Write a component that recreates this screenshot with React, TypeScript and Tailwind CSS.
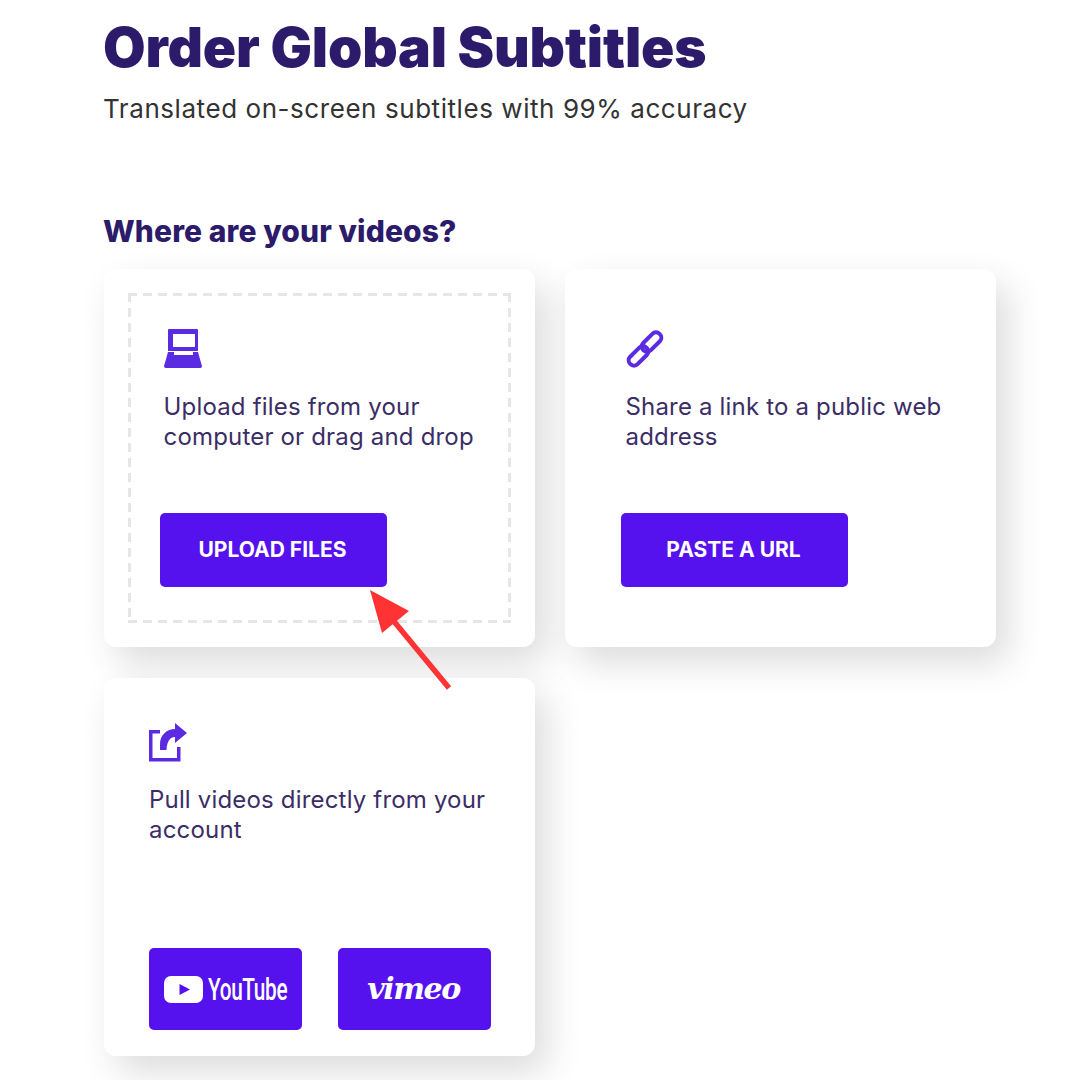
const inter = "font-['Inter',sans-serif]";

function LaptopIcon() {
  return (
    <svg width="38" height="40" viewBox="0 0 38 40" fill="#5a2be0" className="block">
      <path fillRule="evenodd" d="M5 1h28a1 1 0 0 1 1 1v21H4V2a1 1 0 0 1 1-1zM9 6v13h22V6z" />
      <path d="M4 24h6v3h19v-3h5l3.800 13.500a1.800 1.800 0 0 1-1.800 2.500H2a1.800 1.800 0 0 1-1.800-2.500z" />
    </svg>
  );
}

function LinkIcon() {
  return (
    <svg width="38" height="38" viewBox="0 0 38 38" fill="none" stroke="#5a2be0" strokeWidth="4" className="block overflow-visible">
      <g transform="rotate(-45 19 19)">
        <rect x="-2" y="14" width="23" height="10.500" rx="5" />
        <rect x="17" y="13.500" width="23" height="10.500" rx="5" />
      </g>
    </svg>
  );
}

function ShareIcon() {
  return (
    <svg width="40" height="40" viewBox="0 0 40 40" fill="#5a2be0" className="block">
      <path d="M0 7h11v3.500H3.500v24.500h24.500V24h3.500v14.500H0z" />
      <path d="M11 27V21C11 12 18 6 26 6V0L38 10L26 20V14C21 14 18 18 17.500 27Z" />
    </svg>
  );
}

function Arrow() {
  return (
    <svg className="absolute left-[360px] top-[580px]" width="100" height="120" viewBox="360 580 100 120">
      <path d="M370 590L409 611L382 633Z" fill="#ff3333" />
      <path d="M392 619L449 688" stroke="#ff3333" strokeWidth="5.500" fill="none" />
    </svg>
  );
}

function PrimaryButton({ label }: { label: string }) {
  return (
    <button className={`${inter} w-[227px] h-[74px] pr-[2px] rounded-[5px] bg-[#5512ee] text-white text-[21px] font-bold`}>
      {label}
    </button>
  );
}

export default function App() {
  return (
    <div className={`${inter} relative w-[1080px] h-[1080px] overflow-hidden bg-white pl-[104px] pt-[17px]`}>
      <h1 className="-ml-px text-[55px] leading-[60px] font-black text-[#2c1a6b] tracking-[-0.16px]">Order Global Subtitles</h1>
      <p className="-ml-px mt-[16px] text-[26px] leading-[32px] text-[#333333] tracking-[0.56px]">
        Translated on-screen subtitles with 99% accuracy
      </p>

      <h2 className="-ml-px mt-[88px] text-[30px] leading-[36px] font-extrabold text-[#2c1a6b] tracking-[0.1px]">Where are your videos?</h2>

      <div className="mt-[20px] grid grid-cols-[431px_431px] gap-x-[30px] gap-y-[31px]">
        {/* upload */}
        <div className="h-[378px] rounded-[12px] bg-white shadow-[12px_16px_36px_rgba(0,0,0,0.14)] p-[24px]">
          <div className="h-[330px] w-[383px] pl-[36px] pt-[35px] [background-image:linear-gradient(to_right,#e6e6e6_9px,transparent_9px),linear-gradient(to_right,#e6e6e6_9px,transparent_9px),linear-gradient(to_bottom,#e6e6e6_9px,transparent_9px),linear-gradient(to_bottom,#e6e6e6_9px,transparent_9px)] [background-size:15px_3px,15px_3px,3px_15px,3px_15px] [background-position:0_0,0_100%,0_0,100%_0] [background-repeat:repeat-x,repeat-x,repeat-y,repeat-y]">
            <LaptopIcon />
            <p className="-ml-[0.5px] mt-[24px] text-[24px] leading-[30px] text-[#3b2d66] tracking-[0.18px]">
              Upload files from your
              <br />
              computer or drag and drop
            </p>
            <div className="mt-[61px] -ml-[4px]">
              <PrimaryButton label="UPLOAD FILES" />
            </div>
          </div>
        </div>

        {/* link */}
        <div className="h-[378px] rounded-[12px] bg-white shadow-[12px_16px_36px_rgba(0,0,0,0.14)] pl-[61px] pt-[61px]">
          <LinkIcon />
          <p className="-ml-[0.5px] mt-[24px] text-[24px] leading-[30px] text-[#3b2d66] tracking-[0.18px]">
            Share a link to a public web
            <br />
            address
          </p>
          <div className="mt-[61px] -ml-[5px]">
            <PrimaryButton label="PASTE A URL" />
          </div>
        </div>

        {/* accounts */}
        <div className="h-[378px] rounded-[12px] bg-white shadow-[12px_16px_36px_rgba(0,0,0,0.14)] pl-[45px] pt-[45px]">
          <ShareIcon />
          <p className="mt-[22px] text-[24px] leading-[30px] text-[#3b2d66] tracking-[0.18px]">
            Pull videos directly from your
            <br />
            account
          </p>
          <div className="mt-[103px] flex gap-[36px]">
            <div className="w-[153px] h-[82px] rounded-[5px] bg-[#5512ee] flex items-center pl-[15px] gap-[5px] text-white">
              <svg width="39" height="27" viewBox="0 0 39 27">
                <rect x="0" y="0" width="39" height="27" rx="7" fill="#ffffff" />
                <path d="M15.500 8L26 13.500L15.500 19Z" fill="#5512ee" />
              </svg>
              <span className="font-['Roboto',sans-serif] text-[31px] leading-none font-medium tracking-[-0.5px] inline-block w-[78px] origin-left scale-x-[0.67] whitespace-nowrap">
                YouTube
              </span>
            </div>
            <div className="w-[153px] h-[82px] rounded-[5px] bg-[#5512ee] flex items-center justify-center pr-[2px] text-white">
              <span className="font-['DejaVu_Serif',serif] italic font-bold text-[30px] leading-none tracking-[-1.4px]">vimeo</span>
            </div>
          </div>
        </div>
      </div>

      <Arrow />
    </div>
  );
}
